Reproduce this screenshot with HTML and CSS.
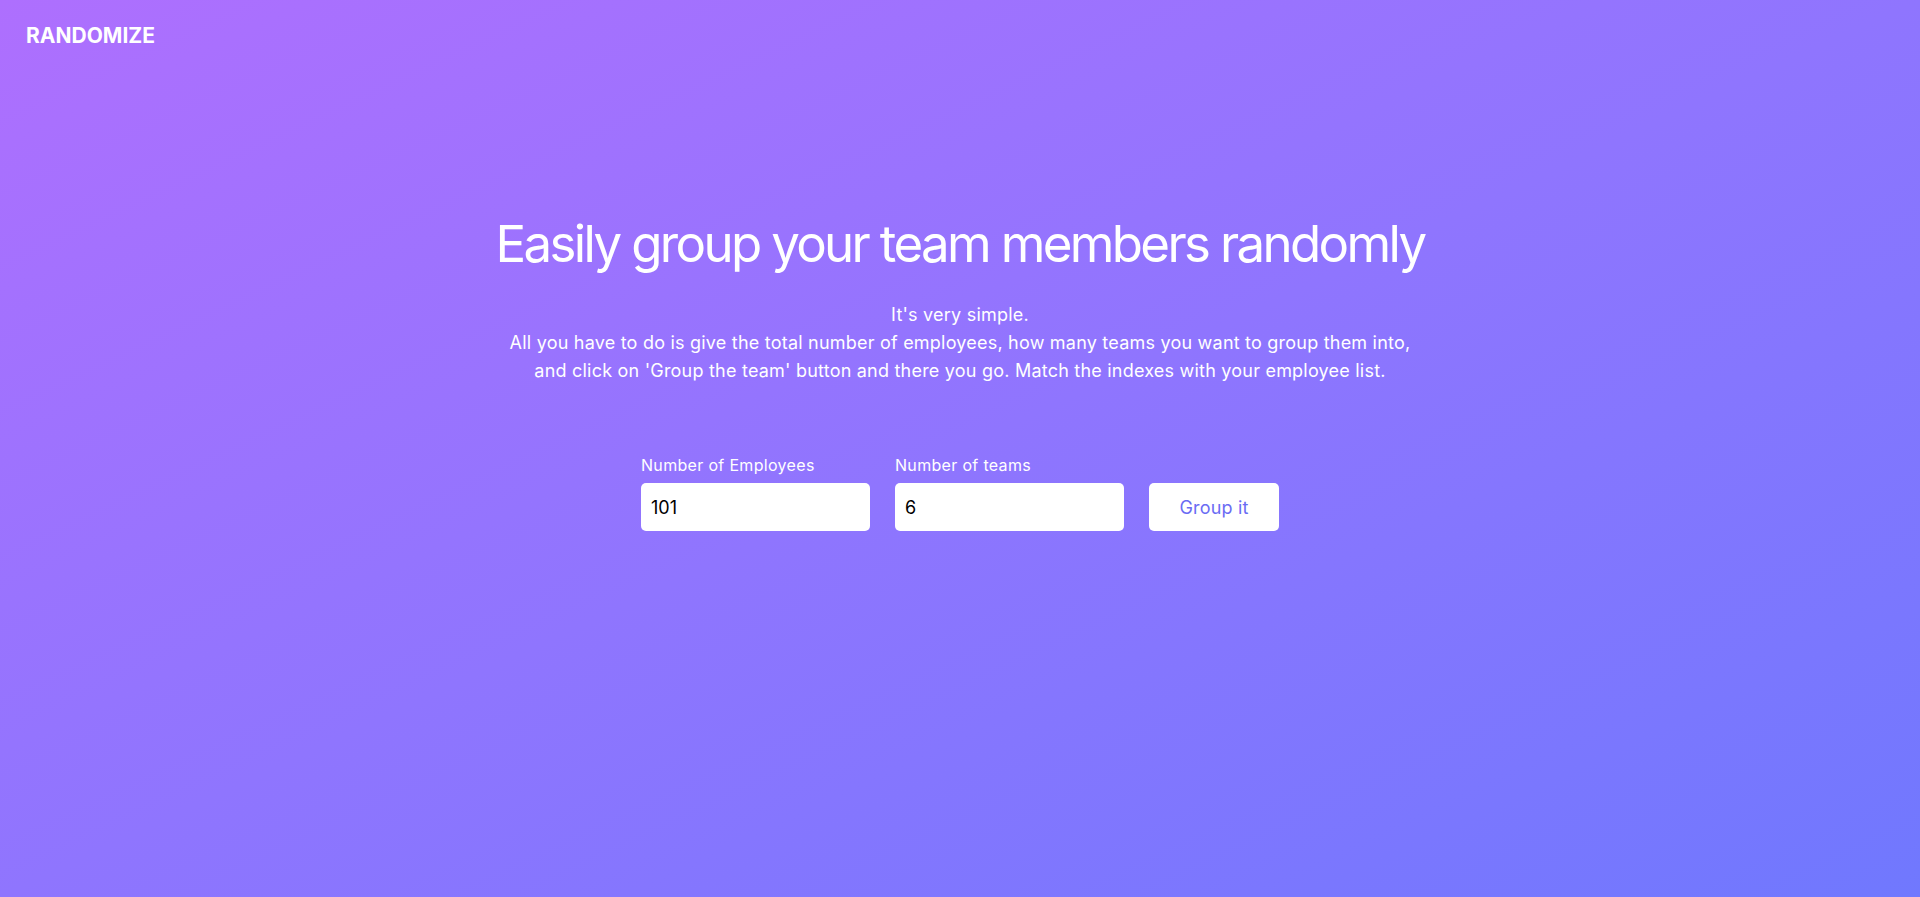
FILE: index.html
```html
<!DOCTYPE html>
<html lang="en">
<head>
<meta charset="utf-8">
<title>Randomize</title>
<link rel="stylesheet" href="styles.css">
</head>
<body>
<div class="page">
  <header class="header">
    <div class="logo">RANDOMIZE</div>
  </header>
  <main class="main">
    <h1 class="title">Easily group your team members randomly</h1>
    <p class="intro">It's very simple.<br>All you have to do is give the total number of employees, how many teams you want to group them into,<br>and click on 'Group the team' button and there you go. Match the indexes with your employee list.</p>
    <form class="form">
      <label class="field">
        <span class="field-label">Number of Employees</span>
        <input class="field-input" type="text" value="101">
      </label>
      <label class="field">
        <span class="field-label">Number of teams</span>
        <input class="field-input" type="text" value="6">
      </label>
      <button class="btn" type="button">Group it</button>
    </form>
  </main>
</div>
</body>
</html>
```

FILE: styles.css
```css
* { box-sizing: border-box; }
html, body { margin: 0; padding: 0; height: 100%; }
body {
  font-family: Inter, "Noto Sans", "Liberation Sans", sans-serif;
  color: #fff;
  background: linear-gradient(to bottom right, #ae6ffe 0%, #8f75fe 50%, #7078fe 100%);
  min-height: 100vh;
}
.page { min-height: 100vh; display: flex; flex-direction: column; }
.header { padding: 24px 26px 0; }
.logo {
  font-size: 21px;
  font-weight: 700;
  line-height: 24px;
  letter-spacing: 0;
}
.main {
  display: flex;
  flex-direction: column;
  align-items: center;
  padding-top: 165px;
}
.title {
  margin: 0;
  font-size: 51px;
  font-weight: 400;
  line-height: 62px;
  letter-spacing: -0.052em;
  text-align: center;
}
.intro {
  margin: 26px 0 0;
  font-size: 18px;
  line-height: 28px;
  text-align: center;
  letter-spacing: 0.012em;
}
.form {
  margin-top: 70px;
  display: flex;
  align-items: flex-end;
  gap: 25px;
}
.field { display: flex; flex-direction: column; gap: 8px; }
.field-label {
  font-size: 16px;
  line-height: 20px;
  letter-spacing: 0.02em;
}
.field-input {
  width: 229px;
  height: 48px;
  border: none;
  border-radius: 5px;
  background: #fff;
  padding: 0 10px;
  font-family: inherit;
  font-size: 18px;
  color: #000;
  outline: none;
}
.btn {
  width: 130px;
  height: 48px;
  border: none;
  border-radius: 5px;
  background: #fff;
  color: #6a6cf4;
  font-family: inherit;
  font-size: 18px;
  letter-spacing: 0.01em;
  cursor: pointer;
}
```
